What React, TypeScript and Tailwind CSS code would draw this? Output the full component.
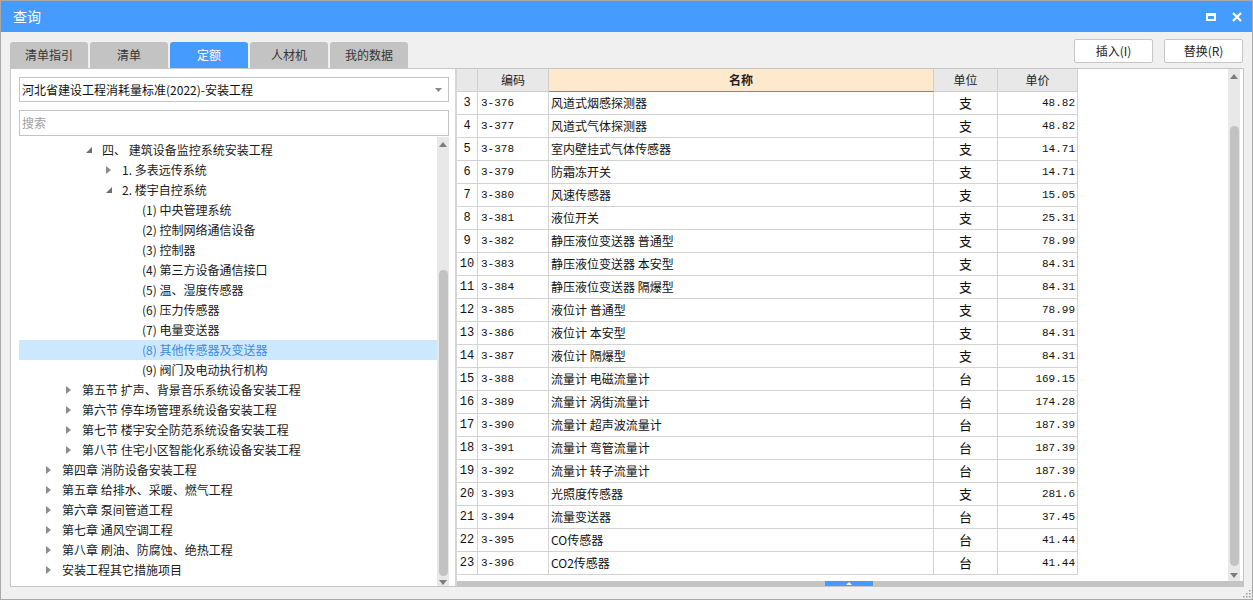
import React from "react"

const CJK = "font-['Noto_Sans_CJK_SC','Noto_Sans',sans-serif]"
const MONO = "font-['Liberation_Mono','DejaVu_Sans_Mono',monospace]"

type TreeItem = { text: string; level: number; state?: "open" | "closed"; selected?: boolean }

const TREE: TreeItem[] = [
    { text: "四、 建筑设备监控系统安装工程", level: 2, state: "open" },
    { text: "1. 多表远传系统", level: 3, state: "closed" },
    { text: "2. 楼宇自控系统", level: 3, state: "open" },
    { text: "(1) 中央管理系统", level: 4 },
    { text: "(2) 控制网络通信设备", level: 4 },
    { text: "(3) 控制器", level: 4 },
    { text: "(4) 第三方设备通信接口", level: 4 },
    { text: "(5) 温、湿度传感器", level: 4 },
    { text: "(6) 压力传感器", level: 4 },
    { text: "(7) 电量变送器", level: 4 },
    { text: "(8) 其他传感器及变送器", level: 4, selected: true },
    { text: "(9) 阀门及电动执行机构", level: 4 },
    { text: "第五节 扩声、背景音乐系统设备安装工程", level: 1, state: "closed" },
    { text: "第六节 停车场管理系统设备安装工程", level: 1, state: "closed" },
    { text: "第七节 楼宇安全防范系统设备安装工程", level: 1, state: "closed" },
    { text: "第八节 住宅小区智能化系统设备安装工程", level: 1, state: "closed" },
    { text: "第四章 消防设备安装工程", level: 0, state: "closed" },
    { text: "第五章 给排水、采暖、燃气工程", level: 0, state: "closed" },
    { text: "第六章 泵间管道工程", level: 0, state: "closed" },
    { text: "第七章 通风空调工程", level: 0, state: "closed" },
    { text: "第八章 刷油、防腐蚀、绝热工程", level: 0, state: "closed" },
    { text: "安装工程其它措施项目", level: 0, state: "closed" },
]

// indent per tree level, written out so tailwind sees them
const INDENT = ["pl-[27px]", "pl-[47px]", "pl-[67px]", "pl-[87px]", "pl-[107px]"]

const ROWS: [number, string, string, string, string][] = [
    [3, "3-376", "风道式烟感探测器", "支", "48.82"],
    [4, "3-377", "风道式气体探测器", "支", "48.82"],
    [5, "3-378", "室内壁挂式气体传感器", "支", "14.71"],
    [6, "3-379", "防霜冻开关", "支", "14.71"],
    [7, "3-380", "风速传感器", "支", "15.05"],
    [8, "3-381", "液位开关", "支", "25.31"],
    [9, "3-382", "静压液位变送器 普通型", "支", "78.99"],
    [10, "3-383", "静压液位变送器 本安型", "支", "84.31"],
    [11, "3-384", "静压液位变送器 隔爆型", "支", "84.31"],
    [12, "3-385", "液位计 普通型", "支", "78.99"],
    [13, "3-386", "液位计 本安型", "支", "84.31"],
    [14, "3-387", "液位计 隔爆型", "支", "84.31"],
    [15, "3-388", "流量计 电磁流量计", "台", "169.15"],
    [16, "3-389", "流量计 涡街流量计", "台", "174.28"],
    [17, "3-390", "流量计 超声波流量计", "台", "187.39"],
    [18, "3-391", "流量计 弯管流量计", "台", "187.39"],
    [19, "3-392", "流量计 转子流量计", "台", "187.39"],
    [20, "3-393", "光照度传感器", "支", "281.6"],
    [21, "3-394", "流量变送器", "台", "37.45"],
    [22, "3-395", "CO传感器", "台", "41.44"],
    [23, "3-396", "CO2传感器", "台", "41.44"],
]

const TABS = ["清单指引", "清单", "定额", "人材机", "我的数据"]

function ArrowUp() {
    return (
        <svg width="8" height="5" viewBox="0 0 8 5">
            <path d="M0 5 L4 0 L8 5 Z" fill="#7d7d7d" />
        </svg>
    )
}

function ArrowDown() {
    return (
        <svg width="8" height="5" viewBox="0 0 8 5">
            <path d="M0 0 L8 0 L4 5 Z" fill="#7d7d7d" />
        </svg>
    )
}

function VScroll({ before, thumb }: { before: string; thumb: string }) {
    return (
        <div className="w-[12px] h-full bg-[#e8e8e8] flex flex-col items-center">
            <div className="h-[14px] flex items-center justify-center shrink-0">
                <ArrowUp />
            </div>
            <div className={`${before} shrink-0`} />
            <div className={`${thumb} w-[9px] rounded-full bg-[#c2c2c2] shrink-0`} />
            <div className="flex-1" />
            <div className="h-[12px] flex items-center justify-center shrink-0">
                <ArrowDown />
            </div>
        </div>
    )
}

function TreeToggle({ state }: { state?: "open" | "closed" }) {
    if (state === "open") {
        return (
            <svg width="6" height="6" viewBox="0 0 6 6">
                <path d="M6 0 L6 6 L0 6 Z" fill="#6f6f6f" />
            </svg>
        )
    }
    if (state === "closed") {
        return (
            <svg width="5" height="8" viewBox="0 0 5 8">
                <path d="M0 0 L5 4 L0 8 Z" fill="#8c8c8c" />
            </svg>
        )
    }
    return null
}

function TitleBar() {
    return (
        <div className="h-[31px] bg-[#469bff] flex items-center pl-[12px] pr-[10px] shrink-0">
            <span className="text-white text-[14px]">查询</span>
            <div className="flex-1" />
            <div className="flex items-center gap-[16px]">
                <div className="w-[10px] h-[8px] border-2 border-t-[3px] border-white" />
                <svg width="10" height="10" viewBox="0 0 10 10">
                    <path d="M1 1 L9 9 M9 1 L1 9" stroke="white" strokeWidth="2.2" />
                </svg>
            </div>
        </div>
    )
}

function TopRow() {
    return (
        <div className="h-[36px] flex pl-[9px] pr-[9px] shrink-0">
            <div className="flex items-end gap-[2px]">
                {TABS.map((t) => (
                    <div
                        key={t}
                        className={
                            t === "定额"
                                ? "w-[78px] h-[26px] rounded-t-[3px] bg-[#469bff] text-white text-[12px] flex items-center justify-center"
                                : "w-[78px] h-[26px] rounded-t-[3px] bg-[#c3c3c3] text-[#333333] text-[12px] flex items-center justify-center"
                        }
                    >
                        {t}
                    </div>
                ))}
            </div>
            <div className="flex-1" />
            <div className="flex gap-[11px] mt-[7px]">
                <button className="w-[79px] h-[24px] border border-[#c6c6c6] rounded-[2px] bg-white text-[12px] text-[#222222]">
                    插入(I)
                </button>
                <button className="w-[79px] h-[24px] border border-[#c6c6c6] rounded-[2px] bg-white text-[12px] text-[#222222]">
                    替换(R)
                </button>
            </div>
        </div>
    )
}

function LeftPanel() {
    return (
        <div className="w-[444px] h-full bg-white flex flex-col pl-[8px] pr-[6px] pt-[8px]">
            <div className="h-[25px] border border-[#c4c4c4] flex items-center pl-[2px] pr-[6px] shrink-0">
                <span className="text-[12px] text-[#111111] flex-1">河北省建设工程消耗量标准(2022)-安装工程</span>
                <svg width="7" height="4" viewBox="0 0 7 4">
                    <path d="M0 0 L7 0 L3.5 4 Z" fill="#888888" />
                </svg>
            </div>
            <div className="h-[26px] mt-[8px] border border-[#c4c4c4] flex items-center pl-[2px] shrink-0">
                <span className="text-[12px] text-[#a0a0a0]">搜索</span>
            </div>
            <div className="flex-1 mt-[1px] flex min-h-0">
                <div className="flex-1 pt-[3px] flex flex-col">
                    {TREE.map((it, i) => (
                        <div
                            key={i}
                            className={`${INDENT[it.level]} h-[20px] flex items-center shrink-0 ${
                                it.selected ? "bg-[#cce8ff] text-[#3b8be0]" : "text-[#1a1a1a]"
                            }`}
                        >
                            <div className="w-[16px] flex items-center">
                                <TreeToggle state={it.state} />
                            </div>
                            <span className="text-[12px] whitespace-pre">{it.text}</span>
                        </div>
                    ))}
                </div>
                <VScroll before="h-[119px]" thumb="h-[306px]" />
            </div>
        </div>
    )
}

function DataTable() {
    const head = "h-[23px] border-r border-b border-[#cfcfcf] flex items-center justify-center text-[12px] text-[#222222]"
    const cell = "h-[23px] border-r border-b border-[#d3d3d3] flex items-center text-[#111111]"
    return (
        <div className="w-[621px] flex flex-col">
            <div className="grid grid-cols-[21px_71px_385px_64px_80px]">
                <div className={`${head} bg-[#e8e8e8]`} />
                <div className={`${head} bg-[#e8e8e8]`}>编码</div>
                <div className={`${head} bg-[#ffe9cc] font-bold border-b-[#3d95f5]`}>名称</div>
                <div className={`${head} bg-[#e8e8e8]`}>单位</div>
                <div className={`${head} bg-[#e8e8e8]`}>单价</div>
            </div>
            {ROWS.map(([n, code, name, unit, price]) => (
                <div key={n} className="grid grid-cols-[21px_71px_385px_64px_80px]">
                    <div className={`${cell} justify-center text-[12px] ${MONO}`}>{n}</div>
                    <div className={`${cell} pl-[3px] text-[11px] ${MONO}`}>{code}</div>
                    <div className={`${cell} pl-[2px] text-[12px] whitespace-pre`}>{name}</div>
                    <div className={`${cell} justify-center text-[13px]`}>{unit}</div>
                    <div className={`${cell} justify-end pr-[2px] text-[11px] ${MONO}`}>{price}</div>
                </div>
            ))}
        </div>
    )
}

function RightPanel() {
    return (
        <div className="flex-1 h-full bg-white flex flex-col">
            <div className="h-[512px] flex">
                <DataTable />
                <div className="flex-1" />
                <VScroll before="h-[43px]" thumb="h-[440px]" />
                <div className="w-[3px]" />
            </div>
            <div className="h-[5px] bg-[#c4c4c4] flex justify-center pr-[3px]">
                <div className="w-[48px] h-full bg-[#469bff] flex items-center justify-center">
                    <svg width="6" height="3" viewBox="0 0 6 3">
                        <path d="M0 3 L3 0 L6 3 Z" fill="white" />
                    </svg>
                </div>
            </div>
        </div>
    )
}

export default function App() {
    return (
        <div className={`w-[1253px] h-[600px] flex flex-col border border-[#a9a9a9] bg-[#f0f0f0] overflow-hidden ${CJK}`}>
            <TitleBar />
            <TopRow />
            <div className="h-[519px] ml-[9px] w-[1234px] border border-[#c6c6c6] flex shrink-0">
                <LeftPanel />
                <div className="w-[2px] h-full bg-[#d6d6d6]" />
                <RightPanel />
            </div>
            <div className="flex-1 flex justify-end items-end pr-[1px] pb-[1px]">
                <svg width="8" height="8" viewBox="0 0 8 8">
                    <g fill="#9a9a9a">
                        <rect x="6" y="0" width="1.5" height="1.5" />
                        <rect x="3" y="3" width="1.5" height="1.5" />
                        <rect x="6" y="3" width="1.5" height="1.5" />
                        <rect x="0" y="6" width="1.5" height="1.5" />
                        <rect x="3" y="6" width="1.5" height="1.5" />
                        <rect x="6" y="6" width="1.5" height="1.5" />
                    </g>
                </svg>
            </div>
        </div>
    )
}
